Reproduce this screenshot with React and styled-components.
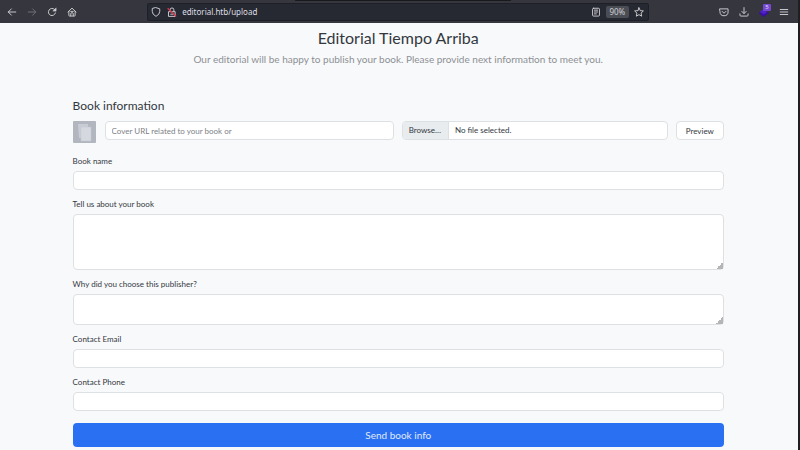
import React from "react";
import styled, { createGlobalStyle } from "styled-components";

const GlobalStyle = createGlobalStyle`
  * { box-sizing: border-box; }
  body {
    margin: 0;
    background: #f8f9fb;
    color: #33383e;
    font-family: Lato, "Noto Sans", sans-serif;
  }
  button, input, textarea { font: inherit; color: inherit; }
`;

const Window = styled.div`
  display: flex;
  flex-direction: column;
  min-height: 100vh;
  border-right: 2px solid #1d1f21;
`;

const Toolbar = styled.header`
  position: relative;
  display: flex;
  align-items: center;
  justify-content: space-between;
  height: 23px;
  padding: 0 8px 0 6px;
  background: #35363e;
  color: #d0d0d5;
  font-family: "Noto Sans", sans-serif;
`;

const TabEdge = styled.div`
  position: absolute;
  top: 0;
  left: 37%;
  right: 36%;
  height: 1px;
  background: #18191d;
`;

const IconRow = styled.nav`
  display: flex;
  gap: 8px;
`;

const IconButton = styled.button`
  position: relative;
  display: flex;
  align-items: center;
  justify-content: center;
  flex: none;
  width: 12px;
  height: 16px;
  padding: 0;
  border: 0;
  background: none;
  opacity: ${(p) => (p.disabled ? 0.4 : 1)};
`;

const Glyph = styled.svg`
  width: 10px;
  height: 10px;
  fill: none;
  stroke: currentColor;
  stroke-width: 1.5;
  stroke-linecap: round;
  stroke-linejoin: round;
`;

const AddressBar = styled.div`
  display: flex;
  align-items: center;
  gap: 4px;
  width: 64%;
  height: 18px;
  padding: 0 3px 0 2px;
  border: 1px solid #1e2027;
  border-radius: 2px;
  background: #272932;
`;

const Address = styled.input`
  flex: 1;
  min-width: 0;
  height: 16px;
  padding: 0;
  border: 0;
  outline: 0;
  background: none;
  color: #dedfe3;
  font-size: 8px;
`;

const Zoom = styled.button`
  width: 23px;
  height: 12px;
  padding: 0;
  border: 0;
  border-radius: 2px;
  background: #4b4d55;
  color: #cdced2;
  font-size: 8px;
  line-height: 12px;
`;

const Badge = styled.span`
  position: absolute;
  top: 0;
  right: -1px;
  width: 8px;
  height: 7px;
  border-radius: 1px;
  background: #7549cf;
  color: #e2d8f6;
  font-size: 6px;
  line-height: 7px;
`;

const Page = styled.main`
  flex: 1;
  padding: 4px 9.3% 3px 9.1%;
`;

const Title = styled.h1`
  margin: 0;
  font-size: 16px;
  font-weight: 400;
  line-height: 22px;
  text-align: center;
`;

const Subtitle = styled.p`
  margin: 2px 0 31px;
  color: #8d9094;
  font-size: 10px;
  font-weight: 400;
  line-height: 16px;
  text-align: center;
`;

const SectionTitle = styled.h2`
  margin: 0 0 7px;
  font-size: 12px;
  font-weight: 400;
  line-height: 16px;
`;

const Form = styled.form`
  font-size: 8px;
`;

const CoverRow = styled.div`
  display: flex;
  align-items: flex-start;
  gap: 8px;
  height: 26px;
`;

const Cover = styled.svg`
  flex: none;
  width: 23px;
  height: 22px;
  margin-right: 1px;
`;

const Input = styled.input`
  display: block;
  width: 100%;
  height: 19px;
  padding: 0 6px;
  border: 1px solid #dee1e4;
  border-radius: 4px;
  outline: 0;
  background: #fff;
  &::placeholder { color: #7c8187; opacity: 1; }
  &:focus { border-color: #86b7fe; }
`;

const UrlInput = styled(Input)`
  flex: 275;
  min-width: 0;
`;

const FilePicker = styled.label`
  position: relative;
  display: flex;
  flex: 264;
  min-width: 0;
  height: 19px;
  overflow: hidden;
  border: 1px solid #dee1e4;
  border-radius: 4px;
  background: #fff;
  line-height: 17px;
`;

const HiddenFile = styled.input`
  position: absolute;
  inset: 0;
  width: 100%;
  opacity: 0;
`;

const Browse = styled.span`
  padding: 0 7px 0 6px;
  border-right: 1px solid #dee1e4;
  background: #e9ecef;
`;

const FileName = styled.span`
  padding: 0 6px;
`;

const Preview = styled.button`
  flex: none;
  width: 48px;
  height: 19px;
  padding: 0;
  border: 1px solid #dee1e4;
  border-radius: 4px;
  background: #fff;
`;

const Field = styled.div`
  margin-top: 8px;
`;

const Label = styled.label`
  display: block;
  margin-bottom: 4px;
  line-height: 12px;
`;

const TextArea = styled.textarea`
  display: block;
  width: 100%;
  height: ${(p) => (p.rows > 2 ? 56 : 31)}px;
  padding: 3px 6px;
  border: 1px solid #dee1e4;
  border-radius: 4px;
  outline: 0;
  background: #fff;
  resize: vertical;
  &::-webkit-resizer {
    background: linear-gradient(135deg, transparent 50%, #b5b5b8 50%) right bottom / 7px 7px no-repeat;
  }
`;

const Submit = styled.button`
  display: block;
  width: 100%;
  height: 24px;
  margin-top: 12px;
  padding: 0;
  border: 0;
  border-radius: 4px;
  background: #2970f3;
  color: #e0eafd;
  font-size: 10px;
`;

function Icon({ children }) {
  return <Glyph viewBox="0 0 16 16" aria-hidden="true">{children}</Glyph>;
}

function BrowserBar() {
  return (
    <Toolbar>
      <TabEdge />
      <IconRow aria-label="Navigation">
        <IconButton aria-label="Back"><Icon><path d="M14 8H2M7 3L2 8l5 5" /></Icon></IconButton>
        <IconButton aria-label="Forward" disabled><Icon><path d="M2 8h12M9 3l5 5-5 5" /></Icon></IconButton>
        <IconButton aria-label="Reload"><Icon><path d="M13.5 9.5A5.7 5.7 0 1 1 12 4l1.5 1.5" /><path d="M14.5 2v4.5H10z" fill="currentColor" strokeWidth="1" /></Icon></IconButton>
        <IconButton aria-label="Home"><Icon><path d="M1.5 8L8 1.8 14.5 8M3 7v6.5q0 1 1 1h8q1 0 1-1V7M6 14v-3q0-2 2-2t2 2v3M6 7h4" /></Icon></IconButton>
      </IconRow>
      <AddressBar>
        <IconButton aria-label="Tracking protection"><Icon><path d="M8 1l6 2v4q0 5-6 8-6-3-6-8V3z" /></Icon></IconButton>
        <IconButton aria-label="Connection not secure">
          <Icon><path d="M3 7.5h10V15H3zM5 7V4.5a3 3 0 0 1 6 0V7" /><path d="M6 11.5h4" /><path d="M1.5 2.5l12.5 12" stroke="#d93a50" strokeWidth="2" /></Icon>
        </IconButton>
        <Address aria-label="Address" defaultValue="editorial.htb/upload" />
        <IconButton aria-label="Reader view"><Icon><rect x="2.5" y="2" width="11" height="12.5" rx="1.5" /><path d="M5.5 5h5M5.5 8h5M5.5 11h3" /></Icon></IconButton>
        <Zoom>90%</Zoom>
        <IconButton aria-label="Bookmark"><Icon><path d="M8 1.3l2 4.5 5 .5-3.7 3.4 1 5L8 12.2l-4.3 2.5 1-5L1 6.3l5-.5z" /></Icon></IconButton>
      </AddressBar>
      <IconRow aria-label="Tools">
        <IconButton aria-label="Pocket"><Icon><path d="M1.5 3h13v5a6.5 6 0 0 1-13 0zM5 7l3 3 3-3" /></Icon></IconButton>
        <IconButton aria-label="Downloads"><Icon><path d="M8 1v9M4.5 7L8 10.5 11.5 7M1.5 11v2q0 1.5 1.5 1.5h10q1.5 0 1.5-1.5v-2" /></Icon></IconButton>
        <IconButton aria-label="Extension">
          <Icon><path d="M0.8 9.5l7-3.5 7 3.5-7 5.5z" fill="#3a10a0" stroke="#3a10a0" /><path d="M1 8l6-5 6 5-5 3.5z" fill="#5020c8" stroke="none" /></Icon>
          <Badge>5</Badge>
        </IconButton>
        <IconButton aria-label="Menu"><Icon><path d="M2 4h12M2 8h12M2 12h12" /></Icon></IconButton>
      </IconRow>
    </Toolbar>
  );
}

export default function App() {
  return (
    <>
      <GlobalStyle />
      <Window>
        <BrowserBar />
        <Page>
          <Title>Editorial Tiempo Arriba</Title>
          <Subtitle>Our editorial will be happy to publish your book. Please provide next information to meet you.</Subtitle>
          <SectionTitle>Book information</SectionTitle>
          <Form onSubmit={(e) => e.preventDefault()}>
            <CoverRow>
              <Cover viewBox="0 0 23 22" role="img" aria-label="Book cover">
                <rect width="23" height="22" rx="1" fill="#b2b6be" />
                <path d="M5 3h10v14H6z" fill="#c8cdd5" />
                <path d="M8 6l10 0 0 14H8z" fill="#d5d9df" stroke="#c1c6cd" strokeWidth="0.5" />
              </Cover>
              <UrlInput aria-label="Cover URL" placeholder="Cover URL related to your book or" />
              <FilePicker>
                <HiddenFile type="file" aria-label="Cover file" />
                <Browse>Browse…</Browse>
                <FileName>No file selected.</FileName>
              </FilePicker>
              <Preview type="button">Preview</Preview>
            </CoverRow>
            <Field>
              <Label htmlFor="name">Book name</Label>
              <Input id="name" />
            </Field>
            <Field>
              <Label htmlFor="about">Tell us about your book</Label>
              <TextArea id="about" rows={4} />
            </Field>
            <Field>
              <Label htmlFor="why">Why did you choose this publisher?</Label>
              <TextArea id="why" rows={2} />
            </Field>
            <Field>
              <Label htmlFor="email">Contact Email</Label>
              <Input id="email" type="email" />
            </Field>
            <Field>
              <Label htmlFor="phone">Contact Phone</Label>
              <Input id="phone" type="tel" />
            </Field>
            <Submit>Send book info</Submit>
          </Form>
        </Page>
      </Window>
    </>
  );
}
